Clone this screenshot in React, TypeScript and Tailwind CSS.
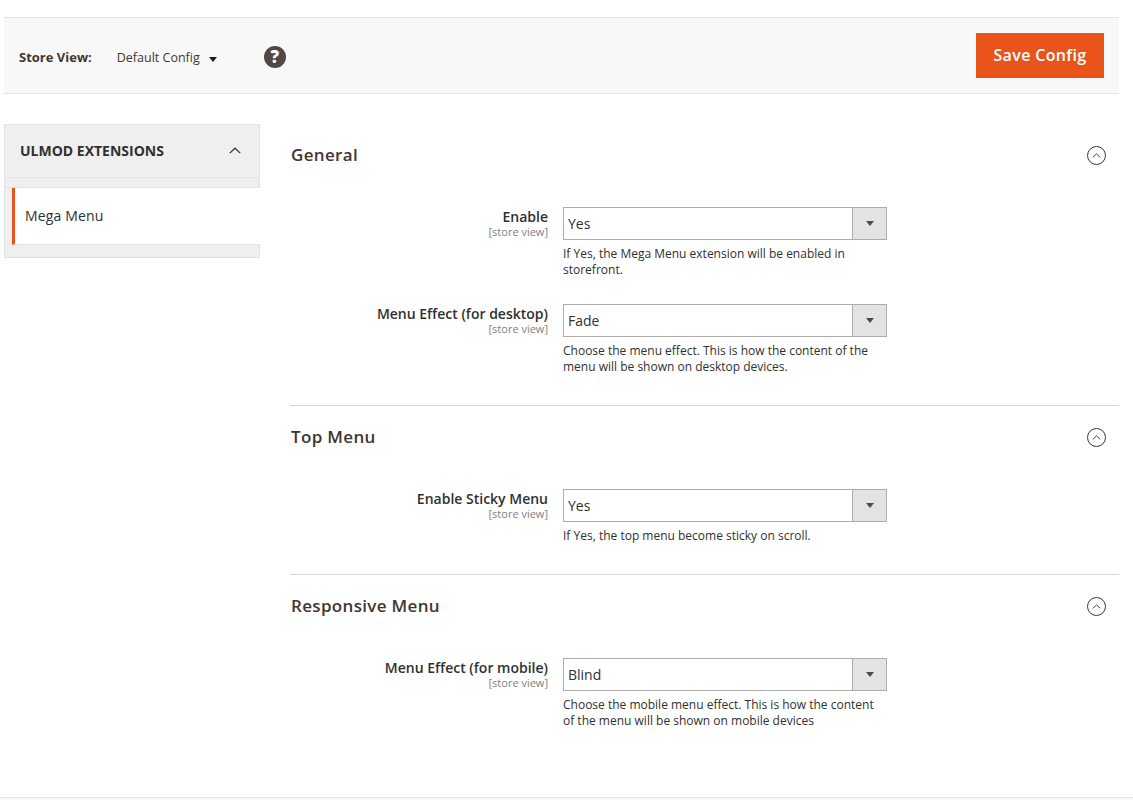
import type { ReactNode } from 'react';

function Chevron({ className }: { className?: string }) {
  return (
    <svg viewBox="0 0 14 8" className={className} fill="none" stroke="currentColor" strokeWidth="1.5">
      <path d="M1 7l6-5.6L13 7" />
    </svg>
  );
}

function SectionHead({ title }: { title: string }) {
  return (
    <div className="flex h-[24px] items-center justify-between pr-[13px] pl-[1px]">
      <h2 className="text-[17px] font-semibold tracking-[0.33px] text-[#41362f]">{title}</h2>
      <span className="flex h-[19px] w-[19px] items-center justify-center rounded-full border border-[#41362f] text-[#41362f]">
        <Chevron className="h-[5px] w-[9px]" />
      </span>
    </div>
  );
}

function Field({ label, value, note }: { label: string; value: string; note: ReactNode }) {
  return (
    <div className="flex">
      <div className="w-[258px] text-right">
        <div className="text-[14px] leading-[19px] font-semibold text-[#303030]">{label}</div>
        <div className="text-[11px] leading-[12px] text-[#808080]">[store view]</div>
      </div>
      <div className="ml-[15px] w-[324px]">
        <div className="flex h-[33px] items-stretch border border-[#adadad] bg-white">
          <div className="flex-1 pl-[4px] text-[14px] leading-[32px] text-[#303030]">{value}</div>
          <div className="flex w-[34px] items-center justify-center border-l border-[#adadad] bg-[#e3e3e3]">
            <span className="h-0 w-0 border-x-[4px] border-t-[5px] border-x-transparent border-t-[#514943]" />
          </div>
        </div>
        <p className="mt-[6px] text-[12px] leading-[16px] text-[#303030]">{note}</p>
      </div>
    </div>
  );
}

export default function App() {
  return (
    <div className="relative h-[800px] w-[1133px] overflow-hidden bg-white font-['Open_Sans',sans-serif]">
      <div className="pt-[17px] pl-[4px] pr-[14px]">
        <div className="flex h-[77px] items-center border-y border-[#e3e3e3] bg-[#f8f8f8] pr-[15px] pl-[15px]">
          <div className="flex items-center pt-[5px]">
            <span className="text-[13px] font-bold text-[#41362f]">Store View:</span>
            <span className="ml-[25px] text-[12.5px] text-[#41362f]">Default Config</span>
            <span className="ml-[9px] mt-[2px] h-0 w-0 border-x-[4px] border-t-[5px] border-x-transparent border-t-[#1a1a1a]" />
            <span className="ml-[47px] -mt-[3px] flex h-[22px] w-[22px] items-center justify-center rounded-full bg-[#514943] text-[17px] leading-none font-extrabold text-white">
              ?
            </span>
          </div>
          <button className="ml-auto h-[45px] w-[128px] bg-[#e85419] pb-[2px] text-[16px] font-semibold tracking-[0.35px] text-white">
            Save Config
          </button>
        </div>
      </div>

      <div className="flex pl-[4px] pr-[14px] pt-[30px]">
        <aside className="h-[134px] w-[256px] shrink-0 border border-[#e3e3e3] bg-[#efefef]">
          <div className="flex h-[53px] items-center justify-between border-b border-[#e3e3e3] pr-[17px] pl-[15px] pb-[2px]">
            <span className="text-[14px] font-bold text-[#303030]">ULMOD EXTENSIONS</span>
            <Chevron className="h-[7px] w-[14px] text-[#41362f]" />
          </div>
          <div className="h-[10px] border-b border-[#e3e3e3]" />
          <div className="-mr-[1px] ml-[7px] flex h-[57px] items-center border-b border-[#e3e3e3] border-l-[3px] border-l-[#e85419] bg-white pl-[10px] pb-[2px] text-[14px] tracking-[0.15px] text-[#303030]">
            Mega Menu
          </div>
        </aside>

        <main className="ml-[30px] flex-1 pt-[19px]">
          <section className="border-b border-[#d6d6d6] pb-[30px]">
            <SectionHead title="General" />
            <div className="mt-[40px] flex flex-col gap-[26px]">
              <Field
                label="Enable"
                value="Yes"
                note={<>If Yes, the Mega Menu extension will be enabled in storefront.</>}
              />
              <Field
                label="Menu Effect (for desktop)"
                value="Fade"
                note={<>Choose the menu effect. This is how the content of the menu will be shown on desktop devices.</>}
              />
            </div>
          </section>
          <section className="border-b border-[#d6d6d6] pb-[30px] pt-[19px]">
            <SectionHead title="Top Menu" />
            <div className="mt-[40px]">
              <Field
                label="Enable Sticky Menu"
                value="Yes"
                note={<>If Yes, the top menu become sticky on scroll.</>}
              />
            </div>
          </section>
          <section className="pt-[19px]">
            <SectionHead title="Responsive Menu" />
            <div className="mt-[40px]">
              <Field
                label="Menu Effect (for mobile)"
                value="Blind"
                note={<>Choose the mobile menu effect. This is how the content of the menu will be shown on mobile devices</>}
              />
            </div>
          </section>
        </main>
      </div>

      <div className="absolute inset-x-0 bottom-0 h-[3px] border-t border-[#e3e3e3] bg-[#f8f8f8]" />
    </div>
  );
}
